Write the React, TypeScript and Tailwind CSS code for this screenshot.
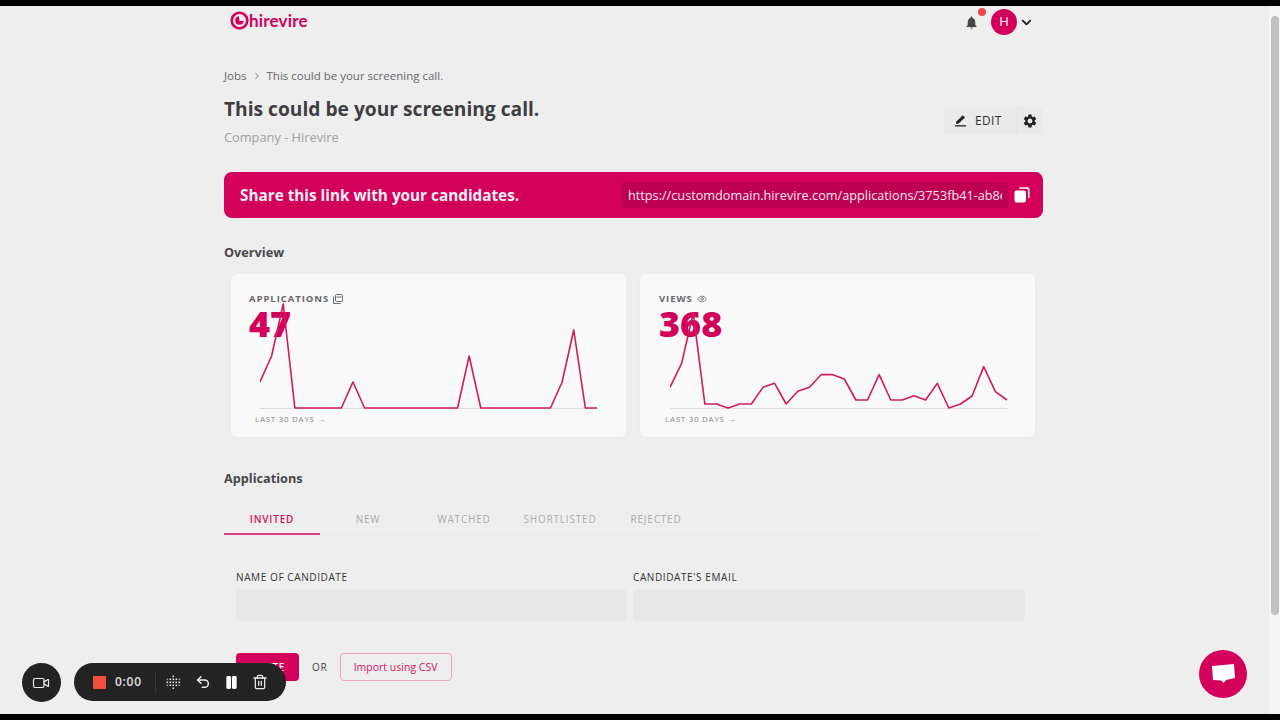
import React from "react";
import { Video, Undo2, Pause, Trash2, ChevronDown, ChevronRight, Eye } from "lucide-react";
import { MdNotifications, MdSettings } from "react-icons/md";

const appsY = [1,2,4,0,0,0,0,0,1,0,0,0,0,0,0,0,0,0,2,0,0,0,0,0,0,0,1,3,0,0].map((v) => 134 - v * 26);
const viewsY = [352,280,130,402,402,414,402,402,352,340,402,364,352,314,314,327,390,390,314,390,390,377,390,340,414,402,378,290,365,390].map((v) => v / 3 - 4);

function Chart({ ys, wide }: { ys: number[]; wide?: boolean }) {
  const pts = ys.map((y, i) => `${i * 11.62},${y}`).join(" ");
  return (
    <svg className={`absolute top-0 pointer-events-none ${wide ? "left-[30px]" : "left-[29px]"}`} width="342" height="150" viewBox="0 0 342 150" fill="none">
      <line x1="0" y1="134.5" x2="338" y2="134.5" stroke="#dcdcdf" strokeWidth="1" />
      <polyline points={pts} stroke="#cf1a5f" strokeWidth="1.6" strokeLinejoin="round" />
    </svg>
  );
}

function StatCard({ label, value, icon, ys, wide }: { label: string; value: string; icon: React.ReactNode; ys: number[]; wide?: boolean }) {
  return (
    <div className={`relative w-[395px] h-[163px] rounded-md bg-[#faf9fa] pt-[20px] shadow-[0_0_8px_rgba(0,0,0,0.025)] ${wide ? "pl-[19px]" : "pl-[18px]"}`}>
      <div className="flex items-center gap-[4px] h-[10px] text-[9.5px] font-bold tracking-[0.1em] text-[#66666a]">
        {label}
        {icon}
      </div>
      <div className="mt-[5px] text-[36px] leading-[30px] font-extrabold text-[#d2005b]">{value}</div>
      <div className={`absolute top-[140px] text-[8px] leading-[10px] tracking-[0.09em] text-[#85858a] ${wide ? "left-[25px]" : "left-[24px]"}`}>LAST 30 DAYS →</div>
      <Chart ys={ys} wide={wide} />
    </div>
  );
}

function Tab({ label, active }: { label: string; active?: boolean }) {
  return (
    <div className={`w-[96px] h-[29px] flex items-center justify-center text-[10px] tracking-[0.08em] border-b-2 ${active ? "border-[#e0407f] text-[#d1135f] font-semibold" : "border-transparent text-[#ababae] font-medium"}`}>
      {label}
    </div>
  );
}

function Logo() {
  return (
    <div className="flex items-center mb-[2px]">
      <svg width="19" height="19" viewBox="0 0 19 19" fill="none">
        <circle cx="9.5" cy="9.5" r="7.8" stroke="#d2005b" strokeWidth="2.6" />
        <path d="M9 5.2 A4.3 4.3 0 1 0 13.8 10 L9.4 10 Z" fill="#d2005b" />
      </svg>
      <span className="text-[17px] leading-[18px] font-bold text-[#d2005b] font-['Lato',sans-serif] tracking-[0.01em]">hirevire</span>
    </div>
  );
}

function DotGrid() {
  const rows = [[0,0,1,0,0],[0,1,1,1,0],[1,1,1,1,1],[0,1,1,1,0],[0,0,1,0,0]];
  return (
    <svg width="15" height="15" viewBox="0 0 15 15">
      {rows.flatMap((r, y) => r.map((v, x) => v ? <rect key={`${x}-${y}`} x={x * 3 + 0.5} y={y * 3 + 0.5} width="1.6" height="1.6" fill="#e6e6e6" /> : null))}
      <rect x="0.5" y="3.5" width="1.6" height="1.6" fill="#9a9a9a" />
      <rect x="12.5" y="3.5" width="1.6" height="1.6" fill="#9a9a9a" />
      <rect x="0.5" y="9.5" width="1.6" height="1.6" fill="#9a9a9a" />
      <rect x="12.5" y="9.5" width="1.6" height="1.6" fill="#9a9a9a" />
    </svg>
  );
}

export default function App() {
  return (
    <div className="relative w-[1280px] h-[720px] overflow-hidden bg-black flex flex-col font-['Open_Sans',sans-serif]">
      <div className="h-[6px] shrink-0 bg-black" />
      <div className="flex h-[708px]">
        <main className="w-[1269px] h-full overflow-hidden bg-[#efeeef] pl-[224px]">
          <div className="w-[819px]">
            <header className="h-[41px] border-b border-[#ebeaeb] flex items-center justify-between pl-[6px] pr-[9px] pb-[9px]">
              <Logo />
              <div className="flex items-center relative pt-[1px]">
                <MdNotifications className="text-[#444448] mr-[12px]" size={15} />
                <span className="w-[8px] h-[8px] rounded-full bg-[#f0484f] absolute left-[14px] top-0" />
                <div className="w-[26px] h-[26px] rounded-full bg-[#d2005b] text-white text-[13px] flex items-center justify-center">H</div>
                <ChevronDown className="text-[#222] ml-[2px]" size={15} strokeWidth={3} />
              </div>
            </header>

            <div className="flex items-center mt-[20px] h-[18px] text-[11.5px] text-[#68686c]">
              Jobs
              <ChevronRight className="mx-[5px] text-[#68686c]" size={10} strokeWidth={2} />
              This could be your screening call.
            </div>

            <div className="flex items-start justify-between">
              <div>
                <h1 className="mt-[10px] text-[19.2px] leading-[27px] font-bold text-[#3e3e42]">This could be your screening call.</h1>
                <p className="mt-[6px] text-[12.8px] leading-[18px] text-[#a0a0a4]">Company - Hirevire</p>
              </div>
              <div className="mt-[22px] flex h-[27px] w-[99px] rounded-sm bg-[#ebeaeb] text-[#333]">
                <div className="flex items-center gap-[8px] pl-[10px] pr-[14px] text-[12px] tracking-[0.03em] border-r border-[#e6e5e6]">
                  <svg width="13" height="13" viewBox="0 0 13 13" fill="#222"><path d="M8.8 1.2 L11 3.4 L4.6 9.6 L2 10 L2.4 7.5 Z" /><rect x="1" y="11.2" width="11" height="1.3" /></svg>
                  EDIT
                </div>
                <div className="flex items-center justify-center w-[27px]">
                  <MdSettings size={16} className="text-[#222]" />
                </div>
              </div>
            </div>

            <div className="mt-[26px] h-[46px] rounded-lg bg-[#d2005b] flex items-center justify-between pl-[16px] pr-[13px]">
              <span className="text-[15.3px] font-bold text-[#fbeef4]">Share this link with your candidates.</span>
              <div className="flex items-center gap-[6px]">
                <div className="w-[386px] h-[26px] px-[6px] rounded-sm bg-[#bd0052]">
                  <div className="text-[12.7px] leading-[26px] text-[#f7e6ee] overflow-hidden whitespace-nowrap">
                    https://customdomain.hirevire.com/applications/3753fb41-ab8e-4c21-9f0a
                  </div>
                </div>
                <svg width="16" height="16" viewBox="0 0 16 16" fill="#fff"><rect x="0.5" y="3.5" width="11.5" height="12" rx="2" /><path d="M5 1.8 C5 .8 5.6 .3 6.5 .3 H13.5 C14.6 .3 15.5 1.2 15.5 2.3 V9.5 C15.5 10.5 15 11 14 11 V3.5 C14 2.4 13.4 1.8 12.3 1.8 Z" /></svg>
              </div>
            </div>

            <h2 className="mt-[26px] text-[12.7px] leading-[17px] font-bold text-[#47474b]">Overview</h2>

            <div className="mt-[13px] flex gap-[14px] pl-[7px]">
              <StatCard
                label="APPLICATIONS"
                value="47"
                ys={appsY}
                icon={<svg width="10" height="10" viewBox="0 0 10 10" fill="none" stroke="#6a6a6e" strokeWidth="1"><rect x="2.5" y="0.5" width="7" height="7" rx="1" /><path d="M3.5 3 H8.5 M0.5 2.5 V9.5 H7.5" /></svg>}
              />
              <StatCard
                label="VIEWS"
                value="368"
                ys={viewsY}
                wide
                icon={<Eye size={10} className="text-[#77777b]" />}
              />
            </div>

            <h2 className="mt-[33px] text-[12.7px] leading-[17px] font-bold text-[#47474b]">Applications</h2>

            <div className="mt-[19px] flex border-b border-[#ebeaeb]">
              <Tab label="INVITED" active />
              <Tab label="NEW" />
              <Tab label="WATCHED" />
              <Tab label="SHORTLISTED" />
              <Tab label="REJECTED" />
            </div>

            <div className="mt-[34px] ml-[12px] flex gap-[6px]">
              <div className="w-[391px]">
                <div className="text-[10px] leading-[14px] tracking-[0.06em] text-[#333]">NAME OF CANDIDATE</div>
                <div className="mt-[5px] h-[32px] rounded-sm bg-[#e9e8e9]" />
              </div>
              <div className="w-[392px]">
                <div className="text-[10px] leading-[14px] tracking-[0.06em] text-[#333]">CANDIDATE'S EMAIL</div>
                <div className="mt-[5px] h-[32px] rounded-sm bg-[#e9e8e9]" />
              </div>
            </div>

            <div className="mt-[32px] ml-[12px] flex items-center">
              <div className="w-[63px] h-[28px] rounded-sm bg-[#d2005b] text-white text-[10px] font-semibold flex items-center justify-center tracking-[0.06em]">INVITE</div>
              <span className="ml-[13px] text-[10px] tracking-[0.08em] text-[#444]">OR</span>
              <div className="ml-[12px] w-[112px] h-[28px] rounded-sm border border-[#e8a6c2] text-[#d1135f] text-[10.5px] flex items-center justify-center pt-[1px]">Import using CSV</div>
            </div>
          </div>
        </main>
        <div className="w-[11px] h-full bg-[#f6f5f6] pt-[10px] pl-[2px]">
          <div className="w-[8px] h-[599px] rounded-full bg-[#c2c1c2]" />
        </div>
      </div>
      <div className="h-[6px] shrink-0 bg-black" />

      <div className="absolute left-[22px] top-[663px] w-[39px] h-[39px] rounded-full bg-[#232323] flex items-center justify-center pr-[1px]">
        <Video size={18} className="text-[#eee]" strokeWidth={1.6} />
      </div>
      <div className="absolute left-[74px] top-[663px] w-[212px] h-[38px] rounded-full bg-[#232323] flex items-center pl-[19px]">
        <span className="w-[13px] h-[13px] bg-[#f04e3e]" />
        <span className="ml-[9px] text-[12px] font-semibold tracking-[0.06em] text-[#e0e0e0]">0:00</span>
        <span className="ml-[13px] w-px h-[20px] bg-[#3a3a3a]" />
        <span className="ml-[10px] flex"><DotGrid /></span>
        <Undo2 size={16} strokeWidth={2.2} className="ml-[14px] text-[#eee]" />
        <Pause size={15} strokeWidth={2.5} className="ml-[13px] text-white fill-white" />
        <Trash2 size={16} strokeWidth={1.9} className="ml-[13px] text-[#eee]" />
      </div>

      <div className="absolute left-[1199px] top-[650px] w-[48px] h-[48px] rounded-full bg-[#d2005b] flex items-center justify-center">
        <svg width="24" height="22" viewBox="0 0 24 22" fill="#fff"><path d="M1 3 L23 1 L24 15 L15 17 L12.5 20 L10.5 17.5 L2 17 Z" /></svg>
      </div>
    </div>
  );
}
